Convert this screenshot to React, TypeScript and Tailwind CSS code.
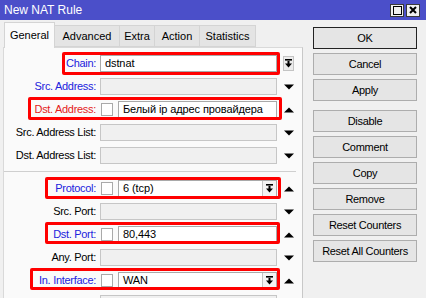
import type { ReactNode } from "react";

type Arrow = "up" | "down" | "drop" | null;

const tabs = ["General", "Advanced", "Extra", "Action", "Statistics"];

const buttons = ["OK", "Cancel", "Apply", "Disable", "Comment", "Copy", "Remove", "Reset Counters", "Reset All Counters"];

function DropGlyph() {
    return (
        <svg width="9" height="9" viewBox="0 0 9 9">
            <rect x="1" y="0" width="7" height="1.6" fill="#000" />
            <rect x="3.5" y="2" width="2" height="3" fill="#000" />
            <path d="M1 4.5h7L4.5 8.5z" fill="#000" />
        </svg>
    );
}

function Triangle({ dir }: { dir: "up" | "down" }) {
    return (
        <svg width="10" height="6" viewBox="0 0 10 6">
            {dir === "up" ? <path d="M0 5.5h10L5 0.5z" fill="#000" /> : <path d="M0 0.5h10L5 5.5z" fill="#000" />}
        </svg>
    );
}

function ArrowCell({ arrow }: { arrow: Arrow }) {
    if (arrow === "drop") {
        return (
            <div className="ml-[6px] flex h-[15px] w-[11px] items-center justify-center border border-[#c4c4c4] bg-[#ececec]">
                <DropGlyph />
            </div>
        );
    }
    return (
        <div className="ml-[7px] flex w-[10px] items-center justify-center">
            {arrow ? <Triangle dir={arrow} /> : null}
        </div>
    );
}

function TextBox({ value, combo }: { value?: string; combo?: boolean }) {
    const filled = value !== undefined;
    return (
        <div
            className={`flex h-[17px] flex-1 items-center border ${
                filled ? "border-[#a9a9a9] bg-white" : "border-[#c6c6c6] bg-[#f0f0f0]"
            }`}
        >
            <span className="flex-1 truncate pl-[4px] text-[11px] leading-none tracking-[-0.1px] text-black">{value}</span>
            {combo ? (
                <div className="flex h-full w-[14px] items-center justify-center border-l border-[#c4c4c4] bg-[#f4f4f4]">
                    <DropGlyph />
                </div>
            ) : null}
        </div>
    );
}

function Row({
    label,
    color = "text-black",
    check,
    children,
    arrow = null,
}: {
    label: string;
    color?: string;
    check?: boolean;
    children: ReactNode;
    arrow?: Arrow;
}) {
    return (
        <div className="flex h-[23px] items-center">
            <div className={`w-[92px] text-right text-[11px] leading-none tracking-[-0.3px] ${color}`}>{label}</div>
            <div className="ml-[4px] flex w-[177px] items-center">
                {check ? <div className="mr-[5px] ml-[1px] h-[13px] w-[12px] border border-[#a9a9a9] bg-white" /> : null}
                {children}
            </div>
            <ArrowCell arrow={arrow} />
        </div>
    );
}

export default function App() {
    return (
        <div className="flex h-[298px] w-[426px] flex-col overflow-hidden bg-[#f0f0f0] font-['Liberation_Sans',Arial,sans-serif] text-[11px] text-black">
            <div className="flex h-[20px] shrink-0 items-center bg-[#4b4fc9] pl-[4px] pr-[6px]">
                <span className="flex-1 text-[12px] text-white">New NAT Rule</span>
                <div className="flex items-center gap-[2px]">
                    <div className="flex h-[13px] w-[14px] items-center justify-center border border-[#3a3a3a] bg-[#f0f0f0]">
                        <div className="h-[9px] w-[9px] border-[1.5px] border-black" />
                    </div>
                    <div className="flex h-[13px] w-[14px] items-center justify-center border border-[#3a3a3a] bg-[#f0f0f0]">
                        <svg width="8" height="8" viewBox="0 0 8 8">
                            <path d="M1 1l6 6M7 1L1 7" stroke="#000" strokeWidth="2" />
                        </svg>
                    </div>
                </div>
            </div>

            <div className="flex flex-1">
                <div className="flex w-[303px] flex-col pl-[3px]">
                    <div className="flex h-[27px] items-end pl-[1px]">
                        {tabs.map((tab, i) => (
                            <div
                                key={tab}
                                className={
                                    i === 0
                                        ? "relative z-10 -mb-px flex h-[26px] w-[51px] items-center justify-center border border-b-0 border-[#d4d4d4] bg-[#fafafa] text-[11px]"
                                        : `flex h-[22px] items-center justify-center border border-l-0 border-[#d4d4d4] bg-[#e4e4e4] text-[11px] ${
                                              i === 1 ? "w-[65px]" : i === 2 ? "w-[35px]" : i === 3 ? "w-[45px]" : "w-[56px]"
                                          }`
                                }
                            >
                                {tab}
                            </div>
                        ))}
                    </div>

                    <div className="relative flex-1 border border-r-[#c8c8c8] border-[#d9d9d9] bg-[#fafafa] pt-[4px]">
                        <Row label="Chain:" color="text-[#2222dd]" arrow="drop">
                            <TextBox value="dstnat" />
                        </Row>
                        <Row label="Src. Address:" color="text-[#2222dd]" arrow="down">
                            <TextBox />
                        </Row>
                        <Row label="Dst. Address:" color="text-[#e41b1b]" check arrow="up">
                            <TextBox value="Белый ip адрес провайдера" />
                        </Row>
                        <Row label="Src. Address List:" arrow="down">
                            <TextBox />
                        </Row>
                        <Row label="Dst. Address List:" arrow="down">
                            <TextBox />
                        </Row>

                        <div className="mt-[4px] mb-[5px] mr-[6px] border-t border-[#cfcfcf]" />

                        <Row label="Protocol:" color="text-[#2222dd]" check arrow="up">
                            <TextBox value="6 (tcp)" combo />
                        </Row>
                        <Row label="Src. Port:" arrow="down">
                            <TextBox />
                        </Row>
                        <Row label="Dst. Port:" color="text-[#2222dd]" check arrow="up">
                            <TextBox value="80,443" />
                        </Row>
                        <Row label="Any. Port:" arrow="down">
                            <TextBox />
                        </Row>
                        <Row label="In. Interface:" color="text-[#2222dd]" check arrow="up">
                            <TextBox value="WAN" combo />
                        </Row>
                        <Row label="" arrow="down">
                            <TextBox />
                        </Row>

                        {/* annotation boxes drawn over the form */}
                        <div className="pointer-events-none absolute left-[58px] top-[4px] h-[23px] w-[218px] rounded-[2px] border-[3px] border-[#ff0000]" />
                        <div className="pointer-events-none absolute left-[24px] top-[49px] h-[23px] w-[254px] rounded-[2px] border-[3px] border-[#ff0000]" />
                        <div className="pointer-events-none absolute left-[41px] top-[129px] h-[22px] w-[236px] rounded-[2px] border-[3px] border-[#ff0000]" />
                        <div className="pointer-events-none absolute left-[41px] top-[174px] h-[22px] w-[235px] rounded-[2px] border-[3px] border-[#ff0000]" />
                        <div className="pointer-events-none absolute left-[26px] top-[220px] h-[22px] w-[250px] rounded-[2px] border-[3px] border-[#ff0000]" />
                    </div>
                </div>

                <div className="ml-[10px] flex w-[104px] flex-col gap-[4px] pt-[7px]">
                    {buttons.map((b, i) => (
                        <div
                            key={b}
                            className={`flex h-[22px] items-center justify-center border bg-[#e5e5e5] text-[11px] tracking-[-0.3px] ${
                                i === 0 ? "border-[#222]" : "border-[#adadad]"
                            } ${i === 3 ? "mt-[5px]" : ""}`}
                        >
                            {b}
                        </div>
                    ))}
                </div>
            </div>
        </div>
    );
}
